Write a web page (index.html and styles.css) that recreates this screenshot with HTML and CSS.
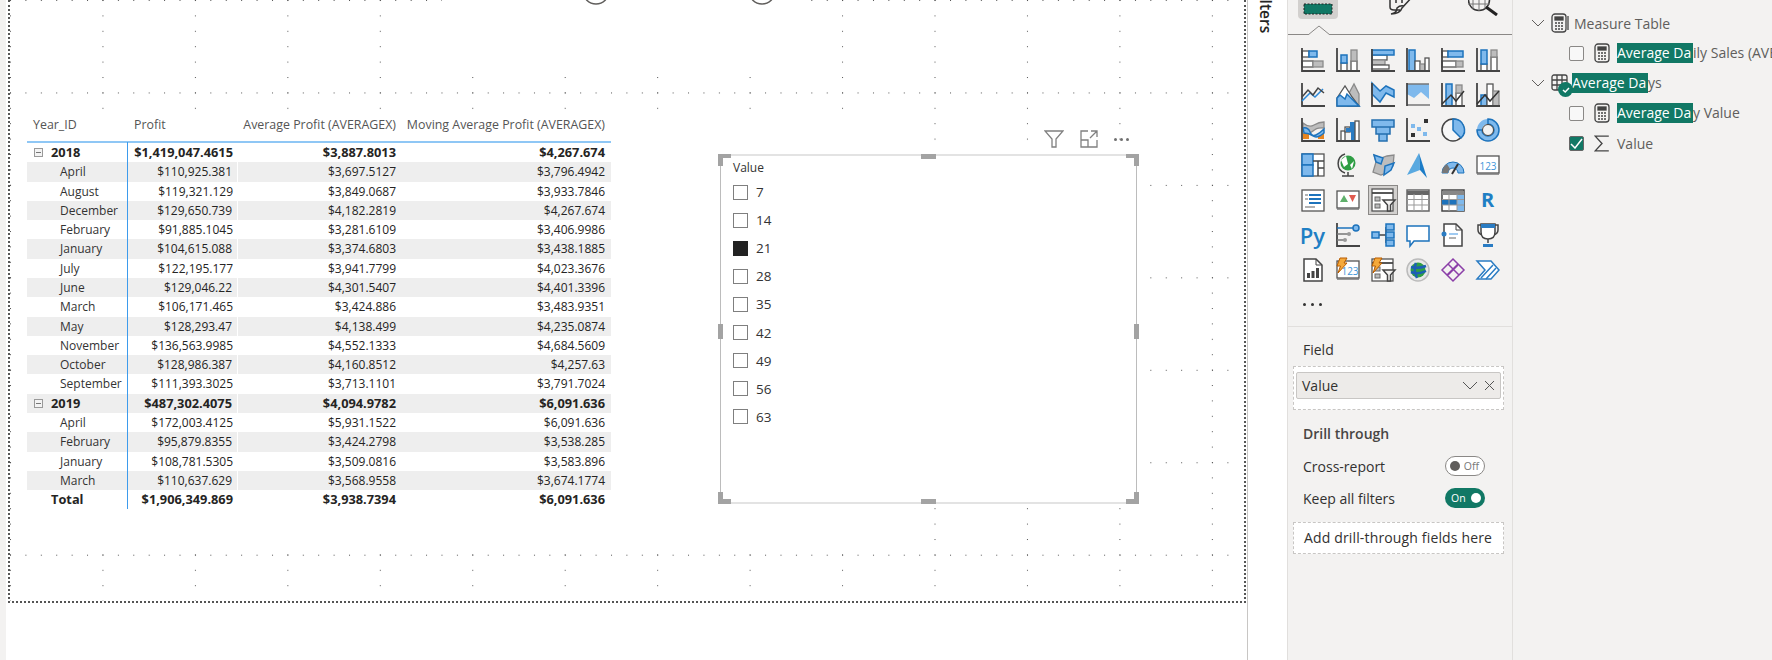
FILE: index.html
```html
<!DOCTYPE html>
<html lang="en">
<head>
<meta charset="utf-8">
<title>Report view</title>
<link rel="stylesheet" href="styles.css">
</head>
<body>
<div class="app">
  <div class="strip"></div>
  <main class="stage">
    <div class="canvas">
      <svg class="dots" xmlns="http://www.w3.org/2000/svg">
        <defs>
          <pattern id="pc" width="92.45" height="15.4" patternUnits="userSpaceOnUse"><rect width="1" height="1" fill="#555"/></pattern>
          <pattern id="pr" width="15.41" height="92.45" patternUnits="userSpaceOnUse"><rect width="1" height="1" fill="#555"/></pattern>
        </defs>
        <rect width="100%" height="100%" fill="url(#pc)"/>
        <rect width="100%" height="100%" fill="url(#pr)"/>
      </svg>
      <div class="blank blank-top"></div>
      <div class="blank blank-mid"></div>
      <svg class="btns" viewBox="0 0 200 8"><circle cx="13" cy="-9" r="13"/><circle cx="179" cy="-9" r="13"/></svg>

      <section class="table">
        <div class="row head"><div class="c1">Year_ID</div><div class="c2 l">Profit</div><div class="c3">Average Profit (AVERAGEX)</div><div class="c4">Moving Average Profit (AVERAGEX)</div></div>
        <div class="tbody">
          <div class="row b"><div class="c1 yr"><i class="minus"></i>2018</div><div class="c2">$1,419,047.4615</div><div class="c3">$3,887.8013</div><div class="c4">$4,267.674</div></div>
          <div class="row z"><div class="c1 mo">April</div><div class="c2">$110,925.381</div><div class="c3">$3,697.5127</div><div class="c4">$3,796.4942</div></div>
          <div class="row"><div class="c1 mo">August</div><div class="c2">$119,321.129</div><div class="c3">$3,849.0687</div><div class="c4">$3,933.7846</div></div>
          <div class="row z"><div class="c1 mo">December</div><div class="c2">$129,650.739</div><div class="c3">$4,182.2819</div><div class="c4">$4,267.674</div></div>
          <div class="row"><div class="c1 mo">February</div><div class="c2">$91,885.1045</div><div class="c3">$3,281.6109</div><div class="c4">$3,406.9986</div></div>
          <div class="row z"><div class="c1 mo">January</div><div class="c2">$104,615.088</div><div class="c3">$3,374.6803</div><div class="c4">$3,438.1885</div></div>
          <div class="row"><div class="c1 mo">July</div><div class="c2">$122,195.177</div><div class="c3">$3,941.7799</div><div class="c4">$4,023.3676</div></div>
          <div class="row z"><div class="c1 mo">June</div><div class="c2">$129,046.22</div><div class="c3">$4,301.5407</div><div class="c4">$4,401.3396</div></div>
          <div class="row"><div class="c1 mo">March</div><div class="c2">$106,171.465</div><div class="c3">$3,424.886</div><div class="c4">$3,483.9351</div></div>
          <div class="row z"><div class="c1 mo">May</div><div class="c2">$128,293.47</div><div class="c3">$4,138.499</div><div class="c4">$4,235.0874</div></div>
          <div class="row"><div class="c1 mo">November</div><div class="c2">$136,563.9985</div><div class="c3">$4,552.1333</div><div class="c4">$4,684.5609</div></div>
          <div class="row z"><div class="c1 mo">October</div><div class="c2">$128,986.387</div><div class="c3">$4,160.8512</div><div class="c4">$4,257.63</div></div>
          <div class="row"><div class="c1 mo">September</div><div class="c2">$111,393.3025</div><div class="c3">$3,713.1101</div><div class="c4">$3,791.7024</div></div>
          <div class="row z b"><div class="c1 yr"><i class="minus"></i>2019</div><div class="c2">$487,302.4075</div><div class="c3">$4,094.9782</div><div class="c4">$6,091.636</div></div>
          <div class="row"><div class="c1 mo">April</div><div class="c2">$172,003.4125</div><div class="c3">$5,931.1522</div><div class="c4">$6,091.636</div></div>
          <div class="row z"><div class="c1 mo">February</div><div class="c2">$95,879.8355</div><div class="c3">$3,424.2798</div><div class="c4">$3,538.285</div></div>
          <div class="row"><div class="c1 mo">January</div><div class="c2">$108,781.5305</div><div class="c3">$3,509.0816</div><div class="c4">$3,583.896</div></div>
          <div class="row z"><div class="c1 mo">March</div><div class="c2">$110,637.629</div><div class="c3">$3,568.9558</div><div class="c4">$3,674.1774</div></div>
          <div class="row b"><div class="c1 tot">Total</div><div class="c2">$1,906,349.869</div><div class="c3">$3,938.7394</div><div class="c4">$6,091.636</div></div>
        </div>
      </section>

      <div class="vis-tools">
        <svg width="20" height="20" viewBox="0 0 20 20"><path d="M1 2H19L12 10V18H8V10Z" class="t"/></svg>
        <svg width="20" height="20" viewBox="0 0 20 20"><path d="M9 2H2V18H18V11M2 11H9V18M12 2H18V8M18 2L11 9" class="t"/></svg>
        <span class="more"><i></i><i></i><i></i></span>
      </div>
      <section class="slicer">
        <b class="h tl"></b><b class="h tr"></b><b class="h bl"></b><b class="h br"></b>
        <b class="m mt"></b><b class="m mb"></b><b class="m ml"></b><b class="m mr"></b>
        <div class="sl-title">Value</div>
        <ul class="sl-list">
          <li><i class="box"></i>7</li>
          <li><i class="box"></i>14</li>
          <li><i class="box on"></i>21</li>
          <li><i class="box"></i>28</li>
          <li><i class="box"></i>35</li>
          <li><i class="box"></i>42</li>
          <li><i class="box"></i>49</li>
          <li><i class="box"></i>56</li>
          <li><i class="box"></i>63</li>
        </ul>
      </section>
    </div>
  </main>

  <aside class="filters"><span>Filters</span></aside>

  <aside class="viz">
    <div class="tabs">
      <div class="tab on"><svg width="30" height="12" viewBox="0 0 30 12"><rect x="1" y="1" width="28" height="10" fill="#117865" stroke="#222" stroke-dasharray="2 1.5"/></svg></div>
      <svg class="tab-ic a" width="28" height="16" viewBox="0 0 28 16"><path d="M2-4V7Q2 10 6 10H12M8-4V3M14-4V3M25-4 14 8Q12 14 3 14Q9 13 9 8Q12 5 16 6" fill="none" stroke="#333" stroke-width="1.5"/></svg>
      <svg class="tab-ic b" width="32" height="16" viewBox="0 0 32 16"><circle cx="11" cy="0" r="10.5" fill="none" stroke="#333" stroke-width="1.5"/><path d="M5-8V9M11-10V11M17-8V9M0 4H22" stroke="#777" fill="none"/><path d="M18 7 29 15" stroke="#222" stroke-width="3"/></svg>
      <svg class="notch" width="22" height="10" viewBox="0 0 22 10"><path d="M0 10 11 1 22 10" fill="#f3f2f1" stroke="#8a8886"/></svg>
    </div>

    <svg width="0" height="0" class="defs">
      <defs>
        <g id="axes"><path d="M1 0V23H24" class="d"/></g>
        <g id="slice"><rect x="1" y="1" width="21" height="22" class="w"/><path d="M1 5H22" class="d" stroke-width="3"/><rect x="4" y="9" width="5" height="4" class="gs"/><rect x="4" y="16" width="5" height="4" class="gs"/><path d="M12 12H24L19.5 17V23H16.500V17Z" fill="#f3f2f1" stroke="#444" stroke-width="1.500"/></g>
        <g id="card"><rect x="1" y="3" width="22" height="17" class="w" stroke="#777"/><path d="M1 21H23" stroke="#777" stroke-width="1.500"/></g>
        <g id="bolt"><path d="M4 0H11L8 5H11L2 15 4.500 8H1Z" fill="#f4a93b" stroke="#b85c00"/></g>
      </defs>
    </svg>

    <div class="icons">
      <svg class="ic" viewBox="0 0 24 24"><rect x="1" y="3" width="7" height="6" class="w"/><rect x="8" y="3" width="8" height="6" class="bl"/><rect x="1" y="13" width="11" height="6" class="w"/><rect x="12" y="13" width="10" height="6" class="gy"/><use href="#axes"/></svg>
      <svg class="ic" viewBox="0 0 24 24"><rect x="5" y="15" width="6" height="8" class="w"/><rect x="5" y="7" width="6" height="8" class="bl"/><rect x="15" y="13" width="6" height="10" class="w"/><rect x="15" y="2" width="6" height="11" class="gy"/><use href="#axes"/></svg>
      <svg class="ic" viewBox="0 0 24 24"><rect x="1" y="7" width="15" height="5" class="w"/><rect x="1" y="2" width="22" height="5" class="bl"/><rect x="1" y="12" width="13" height="5" class="gy"/><rect x="1" y="17" width="17" height="4" class="w"/><path d="M1 1V23H24" class="d"/></svg>
      <svg class="ic" viewBox="0 0 24 24"><rect x="3" y="2" width="6" height="21" class="bl"/><rect x="9" y="13" width="5" height="10" class="w"/><rect x="14" y="16" width="5" height="7" class="gy"/><rect x="19" y="10" width="4" height="13" class="w"/><use href="#axes"/></svg>
      <svg class="ic" viewBox="0 0 24 24"><rect x="1" y="3" width="6" height="6" class="w"/><rect x="7" y="3" width="15" height="6" class="bl"/><rect x="1" y="13" width="14" height="6" class="w"/><rect x="15" y="13" width="7" height="6" class="gy"/><use href="#axes"/></svg>
      <svg class="ic" viewBox="0 0 24 24"><rect x="5" y="16" width="6" height="7" class="w"/><rect x="5" y="2" width="6" height="14" class="bl"/><rect x="15" y="9" width="6" height="14" class="w"/><rect x="15" y="2" width="6" height="7" class="gy"/><use href="#axes"/></svg>

      <svg class="ic" viewBox="0 0 24 24"><use href="#axes"/><path d="M1 18 9 10 14 14 22 6" fill="none" stroke="#2b88d8" stroke-width="1.500"/><path d="M1 14 7 7 12 12 17 5 23 10" fill="none" stroke="#444" stroke-width="1.500"/></svg>
      <svg class="ic" viewBox="0 0 24 24"><path d="M12 12 18 1 23 11V23H12Z" class="gy"/><path d="M1 15 9 3 16 14 23 23H1Z" class="w"/><path d="M1 23V15L4 12 9 16 11 11 23 23Z" class="bl"/></svg>
      <svg class="ic" viewBox="0 0 24 24"><path d="M1 0 9 8 15 3 23 7V14L15 10 9 19 1 11Z" class="bl"/><path d="M1 0V23H24" class="d"/></svg>
      <svg class="ic" viewBox="0 0 24 24"><path d="M1 1H23V16L15 9 8 15 1 11Z" fill="#7fb9ec"/><path d="M1 1H23M1 22H24" stroke="#777" stroke-width="1.500"/><path d="M1 0V23" class="d"/></svg>
      <svg class="ic" viewBox="0 0 24 24"><rect x="5" y="1" width="6" height="22" class="bl"/><rect x="15" y="10" width="6" height="13" class="w"/><rect x="15" y="2" width="6" height="8" class="gy"/><use href="#axes"/><path d="M1 21 10 12 15 18 23 8" fill="none" stroke="#333" stroke-width="1.500"/></svg>
      <svg class="ic" viewBox="0 0 24 24"><rect x="5" y="12" width="6" height="11" class="bl"/><rect x="11" y="1" width="6" height="22" class="w"/><rect x="17" y="8" width="6" height="15" class="gy"/><use href="#axes"/><path d="M1 21 9 12 14 18 23 8" fill="none" stroke="#333" stroke-width="1.500"/></svg>

      <svg class="ic" viewBox="0 0 24 24"><path d="M2 5Q8 10 13 7T23 4V10Q16 9 12 13T2 11Z" class="gy"/><path d="M2 15H8V21H2ZM17 15H23V21H17Z" fill="#e8851f"/><path d="M2 10Q7 9 9 14T15 17 23 11V15Q16 21 12 18T3 15Z" fill="#7fb9ec" stroke="#1d73bc" stroke-width="1.500"/><use href="#axes"/></svg>
      <svg class="ic" viewBox="0 0 24 24"><rect x="5" y="13" width="4" height="10" class="w"/><rect x="9" y="9" width="5" height="5" class="w"/><path d="M10 10H14V4H19V23H15V14H10Z" fill="#2a7cc3"/><rect x="19" y="3" width="4" height="20" class="w"/><use href="#axes"/></svg>
      <svg class="ic" viewBox="0 0 24 24"><path d="M1 2H23V9H1ZM5 9H19V16H5ZM8 16H16V23H8Z" fill="#7fb9ec" stroke="#256fae" stroke-width="1.500"/></svg>
      <svg class="ic" viewBox="0 0 24 24"><use href="#axes"/><rect x="5" y="6" width="4" height="4" fill="#7fb9ec"/><rect x="11" y="9" width="4" height="4" fill="#7fb9ec"/><rect x="18" y="1" width="4" height="4" fill="#333"/><rect x="5" y="15" width="4" height="4" fill="#333"/><rect x="17" y="14" width="4" height="4" fill="#7fb9ec"/></svg>
      <svg class="ic" viewBox="0 0 24 24"><circle cx="12" cy="12" r="11" fill="#f7f7f7" stroke="#444" stroke-width="1.500"/><path d="M12 12V1A11 11 0 0 1 20 20Z" fill="#7fb9ec" stroke="#1d73bc" stroke-width="1.500"/></svg>
      <svg class="ic" viewBox="0 0 24 24"><circle cx="12" cy="12" r="8.500" fill="none" stroke="#7fb9ec" stroke-width="5"/><path d="M12 1A11 11 0 1 1 1 12H6A6 6 0 1 0 12 6Z" fill="#7fb9ec" stroke="#1d73bc" stroke-width="1.500"/><circle cx="12" cy="12" r="5.500" fill="#f3f2f1" stroke="#444"/></svg>

      <svg class="ic" viewBox="0 0 24 24"><rect x="1" y="1" width="22" height="22" class="w" stroke="#444"/><rect x="1" y="1" width="11" height="11" class="bl"/><rect x="1" y="12" width="11" height="11" class="bl"/><path d="M12 8H23M17 8V23M17 15H23" stroke="#444" stroke-width="1.500" fill="none"/></svg>
      <svg class="ic" viewBox="0 0 24 24"><circle cx="12" cy="10" r="7.500" fill="#2f9e44"/><path d="M10 3 5 7 8 14 12 11ZM14 12 18 8 16 16Z" fill="#fff"/><path d="M9 1A10 10 0 0 0 9 20M12 19V23M6 23H18" fill="none" stroke="#444" stroke-width="1.500"/></svg>
      <svg class="ic" viewBox="0 0 24 24"><path d="M3 2 10 5 16 3 23 2 22 13 15 20 10 22 2 19 5 9Z" class="gy" stroke="#555"/><path d="M3 2 12 5 10 11 5 9ZM13 22 14 13 23 10 20 17Z" fill="#7fb9ec" stroke="#1d73bc" stroke-width="1.500"/></svg>
      <svg class="ic" viewBox="0 0 24 24"><path d="M13 0 1 22 14 17Z" fill="#59a9e0"/><path d="M13 0 14 17 21 25Z" fill="#1b7cc7"/></svg>
      <svg class="ic" viewBox="0 0 24 24"><path d="M1 20A11 11 0 0 1 23 20H17A5 5 0 0 0 7 20Z" fill="#7fb9ec" stroke="#1d73bc"/><path d="M1 20A11 11 0 0 1 6 11L9 16A5 5 0 0 0 7 20Z" fill="#777"/><path d="M11 21 17 11" stroke="#333" stroke-width="2"/></svg>
      <svg class="ic" viewBox="0 0 24 24"><use href="#card"/><text x="12" y="16.500" class="num">123</text></svg>

      <svg class="ic" viewBox="0 0 24 24"><rect x="1" y="2" width="22" height="21" class="w"/><path d="M8 7H20M8 11H20" stroke="#1d73bc" stroke-width="2"/><path d="M4 7H7M4 11H7" stroke="#999" stroke-width="1.500"/><path d="M8 15H20" stroke="#1d73bc" stroke-width="2"/><path d="M4 19H14" stroke="#999" stroke-width="1.500"/></svg>
      <svg class="ic" viewBox="0 0 24 24"><use href="#card"/><path d="M4 14 8 7 12 14Z" fill="#5fb06b"/><path d="M13 7H20L16.500 14Z" fill="#e05a4e"/></svg>
      <span class="sel"><svg class="ic" viewBox="0 0 24 24"><use href="#slice"/></svg></span>
      <svg class="ic" viewBox="0 0 24 24"><rect x="1" y="2" width="22" height="21" fill="#fff" stroke="#666" stroke-width="1.500"/><path d="M1 5H23" stroke="#666" stroke-width="4"/><path d="M8 6V23M16 6V23M1 11.500H23M1 17H23" stroke="#999"/></svg>
      <svg class="ic" viewBox="0 0 24 24"><rect x="1" y="2" width="22" height="21" fill="#fff" stroke="#444" stroke-width="1.500"/><path d="M1 5H23" stroke="#888" stroke-width="4"/><rect x="1" y="12" width="22" height="5" fill="#1d73bc"/><rect x="16" y="7" width="7" height="16" fill="#7fb9ec"/><path d="M8 6V23M16 6V23M1 11.500H23M1 17H23" stroke="#999"/></svg>
      <span class="ltr r">R</span>

      <span class="ltr py">Py</span>
      <svg class="ic" viewBox="0 0 24 24"><use href="#axes"/><path d="M1 5H18" stroke="#1d73bc" stroke-width="1.500"/><circle cx="20" cy="5" r="3" fill="#7fb9ec" stroke="#1d73bc" stroke-width="1.500"/><path d="M1 11H12M1 17H8" stroke="#777" stroke-width="1.500"/><circle cx="13" cy="11" r="2" fill="#999"/><circle cx="9" cy="17" r="2" fill="#999"/></svg>
      <svg class="ic" viewBox="0 0 24 24"><path d="M8 12H15M15 4V20" stroke="#444" stroke-width="1.500"/><path d="M1 9H8V15H1ZM15 1H23V7H15ZM15 9H23V15H15ZM15 17H23V23H15Z" fill="#7fb9ec" stroke="#1d73bc" stroke-width="1.500"/></svg>
      <svg class="ic" viewBox="0 0 24 24"><path d="M1 3H23V18H8L4 23V18H1Z" fill="#fff" stroke="#1d73bc" stroke-width="1.500"/></svg>
      <svg class="ic" viewBox="0 0 24 24"><path d="M3 1H15L21 7V23H3Z" fill="#fff" stroke="#444" stroke-width="1.500"/><path d="M15 1V7H21" fill="none" stroke="#444"/><circle cx="3" cy="11" r="2.500" fill="#2a7cc3"/><path d="M8 11H17" stroke="#7fb9ec" stroke-width="1.500"/><path d="M8 15H15" stroke="#999" stroke-width="1.500"/></svg>
      <svg class="ic" viewBox="0 0 24 24"><path d="M5 2H2V7Q2 11 7 12M19 2H22V7Q22 11 17 12M12 16V20M7 22H17" fill="none" stroke="#444" stroke-width="1.500"/><path d="M5 1H19V9Q19 16 12 16T5 9Z" fill="#fff" stroke="#444" stroke-width="1.500"/><path d="M5 1H19V5H5Z" fill="#2a7cc3"/><path d="M7 21H17V24H7Z" fill="#2a7cc3"/></svg>

      <svg class="ic" viewBox="0 0 24 24"><path d="M3 1H15L21 7V23H3Z" fill="#fff" stroke="#444" stroke-width="1.500"/><path d="M15 1V7H21" fill="none" stroke="#444"/><path d="M6 20V15H9V20ZM10.500 20V13H13.500V20ZM15 20V10H18V20Z" fill="#444"/></svg>
      <svg class="ic" viewBox="0 0 24 24"><use href="#card"/><text x="14" y="16.500" class="num">123</text><use href="#bolt"/></svg>
      <svg class="ic" viewBox="0 0 24 24"><use href="#slice"/><use href="#bolt"/></svg>
      <svg class="ic" viewBox="0 0 24 24"><circle cx="12" cy="12" r="11" fill="#e8e8e8" stroke="#bbb" stroke-width="1.500"/><circle cx="12" cy="12" r="7.500" fill="#2f9e44"/><path d="M5 9Q12 11 20 8M5 14Q12 17 20 13M10 5Q7 12 11 20" fill="none" stroke="#1d5fb4" stroke-width="2.500"/></svg>
      <svg class="ic" viewBox="0 0 24 24"><path d="M12 1 23 12 12 23 1 12Z" fill="none" stroke="#8b3fa8" stroke-width="1.500"/><path d="M7 6 18 17M17 6 6 17M12 12 17 7M7 17 12 12" stroke="#8b3fa8" stroke-width="1.500" fill="none"/></svg>
      <svg class="ic" viewBox="0 0 24 24"><path d="M1 3H15L23 12 15 21H1L9 12Z" fill="#fff" stroke="#2a7cc3" stroke-width="1.500"/><path d="M5 20 17 7M10 21 20 10" stroke="#2a7cc3" stroke-width="1.500" fill="none"/></svg>

      <span class="more dark"><i></i><i></i><i></i></span>
    </div>

    <div class="wells">
      <div class="lbl">Field</div>
      <div class="well">
        <div class="chip"><span>Value</span>
          <svg width="16" height="10" viewBox="0 0 16 10"><path d="M1 1 8 8 15 1" class="x"/></svg>
          <svg width="11" height="11" viewBox="0 0 11 11"><path d="M1 1 10 10M10 1 1 10" class="x"/></svg>
        </div>
      </div>
      <div class="drill">Drill through</div>
      <div class="opt first"><span>Cross-report</span><span class="tog off"><i></i>Off</span></div>
      <div class="opt"><span>Keep all filters</span><span class="tog"><em>On</em><i></i></span></div>
      <div class="add">Add drill-through fields here</div>
    </div>
  </aside>

  <aside class="fields">
    <div class="fr t1">
      <svg class="chev" width="14" height="8" viewBox="0 0 14 8"><path d="M1 1 7 7 13 1"/></svg>
      <svg class="calc" width="18" height="20" viewBox="0 0 18 20"><rect x="1" y="1" width="14" height="18" rx="3"/><path d="M17 3V17"/><rect x="4" y="4" width="8" height="3" fill="#444"/><path d="M4 10H6M7 10H9M10 10H12M4 13H6M7 13H9M10 13H12M4 16H6M7 16H9M10 16H12" stroke-width="1.500"/></svg>
      <span class="nm">Measure Table</span>
    </div>
    <div class="fr t2">
      <i class="cb"></i>
      <svg class="calc" width="16" height="20" viewBox="0 0 16 20"><rect x="1" y="1" width="14" height="18" rx="3"/><rect x="4" y="4" width="8" height="3" fill="#444"/><path d="M4 10H6M7 10H9M10 10H12M4 13H6M7 13H9M10 13H12M4 16H6M7 16H9M10 16H12" stroke-width="1.500"/></svg>
      <span class="nm"><span class="hl">Average Da</span>ily Sales (AVERAGEX)</span>
    </div>
    <div class="fr t1">
      <svg class="chev" width="14" height="8" viewBox="0 0 14 8"><path d="M1 1 7 7 13 1"/></svg>
      <span class="tbl">
        <svg class="calc" width="18" height="18" viewBox="0 0 18 18"><rect x="1" y="1" width="15" height="15" rx="2"/><path d="M1 6H16M1 11H16M6 1V16M11 1V16"/></svg>
        <span class="badge"><svg width="8" height="8" viewBox="0 0 8 8"><path d="M1 4 3.200 6 7 2" fill="none" stroke="#fff" stroke-width="1.500"/></svg></span>
      </span>
      <span class="nm"><span class="hl">Average Da</span>ys</span>
    </div>
    <div class="fr t2">
      <i class="cb"></i>
      <svg class="calc" width="16" height="20" viewBox="0 0 16 20"><rect x="1" y="1" width="14" height="18" rx="3"/><rect x="4" y="4" width="8" height="3" fill="#444"/><path d="M4 10H6M7 10H9M10 10H12M4 13H6M7 13H9M10 13H12M4 16H6M7 16H9M10 16H12" stroke-width="1.500"/></svg>
      <span class="nm"><span class="hl">Average Da</span>y Value</span>
    </div>
    <div class="fr t2">
      <i class="cb chk"><svg width="13" height="11" viewBox="0 0 13 11"><path d="M1 6 5 10 12 1" fill="none" stroke="#fff" stroke-width="1.500"/></svg></i>
      <svg class="sig" width="16" height="17" viewBox="0 0 14 15"><path d="M13 1H1L7 7.500 1 14H13" fill="none" stroke="#444" stroke-width="1.200"/></svg>
      <span class="nm">Value</span>
    </div>
  </aside>
</div>
</body>
</html>
```

FILE: styles.css
```css
* { box-sizing: border-box; }
html, body { margin: 0; height: 100%; background: #fff; overflow: hidden; }
body { font-family: "Open Sans", "Noto Sans", sans-serif; color: #252423; }
.app { display: flex; width: 1772px; height: 660px; overflow: hidden; }
.strip { flex: 0 0 6px; background: #f3f2f1; }
.stage { flex: 0 0 1242px; border-right: 1px solid #c8c6c4; padding-left: 2px; }
.canvas { position: relative; width: 1238px; height: 603px; border: 2px dotted #555; border-top: 0; overflow: hidden; background: #fff; }

.dots { position: absolute; left: 0; top: 0; width: 1225px; height: 100%; }
.blank { position: absolute; background: #fff; }
.blank-top { left: 432px; top: 0; width: 356px; height: 70px; }
.blank-mid { left: 4px; top: 110px; width: 890px; height: 436px; }
.btns { position: absolute; left: 573px; top: 0; width: 200px; height: 8px; fill: none; stroke: #605e5c; stroke-width: 1.500; overflow: visible; }

/* table visual */
.table { position: absolute; left: 17px; top: 112px; width: 584px; font-size: 12px; background: #fff; }
.row { display: grid; grid-template-columns: 102px 109px 163px 210px; height: 19.290px; line-height: 19px; white-space: nowrap; }
.row > div { text-align: right; padding-right: 5px; }
.row .c1 { text-align: left; padding: 0 0 0 6px; }
.row .c4 { padding-right: 6px; }
.row .l { text-align: left; padding-left: 5px; }
.head { height: 29px; line-height: 26px; font-size: 12.400px; color: #555; }
.tbody { border-top: 2px solid #8fc7f5; position: relative; }
.tbody::before { content: ""; position: absolute; left: 100px; top: -1px; bottom: 0; width: 1px; background: #3d9bec; }
.z { background: #eee; }
.z > .c2 { border-right: 1px solid #fff; }
.b { font-weight: 700; font-size: 12.800px; }
.row .mo { padding-left: 33px; color: #333; }
.row .yr, .row .tot { padding-left: 24px; position: relative; }
.minus { position: absolute; left: 7px; top: 5px; width: 9px; height: 9px; border: 1px solid #999; background: #f3f3f3; }
.minus::after { content: ""; position: absolute; left: 1px; right: 1px; top: 3px; height: 1px; background: #777; }

/* slicer */
.vis-tools { position: absolute; left: 1034px; top: 129px; display: flex; align-items: center; gap: 15px; }
.t { fill: none; stroke: #808080; stroke-width: 1.300; }
.more { display: inline-flex; gap: 3px; }
.more i { width: 3px; height: 3px; border-radius: 50%; background: #707070; }
.slicer { position: absolute; left: 710px; top: 154px; width: 417px; height: 350px; background: #fff; border: solid #bcbcbc; border-width: 2px 1px; border-top-color: #e3e3e3; border-bottom-color: #e3e3e3; padding: 3px 0 0 12px; }
.sl-title { font-size: 12px; line-height: 18px; color: #333; }
.sl-list { list-style: none; margin: 1px 0 0; padding: 0; }
.sl-list li { display: flex; align-items: center; gap: 8px; height: 28.100px; font-size: 13.500px; color: #333; }
.box { flex: none; width: 15px; height: 15px; border: 1px solid #7f7f7f; background: #fff; }
.box.on { background: #222; border-color: #222; }
.h { position: absolute; width: 13px; height: 12px; border: 0 solid #a3a3a3; }
.tl { left: -3px; top: -2px; border-width: 4px 0 0 5px; }
.tr { right: -3px; top: -2px; border-width: 4px 5px 0 0; }
.bl { left: -3px; bottom: -2px; border-width: 0 0 5px 5px; }
.br { right: -3px; bottom: -2px; border-width: 0 5px 5px 0; }
.m { position: absolute; background: #a3a3a3; }
.mt, .mb { left: 200px; width: 15px; height: 5px; }
.mt { top: -2px; }
.mb { bottom: -2px; }
.ml, .mr { top: 168px; width: 5px; height: 15px; }
.ml { left: -3px; }
.mr { right: -3px; }

/* filters pane */
.filters { flex: 0 0 39px; overflow: hidden; }
.filters span { display: block; writing-mode: vertical-rl; margin: -13px 0 0 8px; font-size: 15.500px; font-weight: 600; line-height: 20px; color: #252423; }

/* visualizations pane */
.viz { flex: 0 0 226px; background: #f3f2f1; border-left: 1px solid #e1dfdd; border-right: 1px solid #e1dfdd; position: relative; }
.tabs { position: relative; height: 35px; border-bottom: 1px solid #8a8886; }
.tab.on { position: absolute; left: 10px; top: 0; width: 40px; height: 19px; background: #d2d0ce; border-radius: 0 0 4px 4px; display: flex; align-items: center; justify-content: center; padding-bottom: 2px; }
.tab-ic { position: absolute; top: 0; }
.tab-ic.a { left: 100px; }
.tab-ic.b { left: 180px; }
.notch { position: absolute; left: 20px; top: 25px; }
.defs { position: absolute; }
.icons { display: grid; grid-template-columns: repeat(6, 35px); grid-auto-rows: 35px; padding: 7px 0 0 7px; height: 292px; justify-items: center; align-items: center; border-bottom: 1px solid #e1dfdd; }
.ic { display: block; width: 24px; height: 24px; overflow: visible; }
.d { fill: none; stroke: #444; stroke-width: 1.800; }
.w { fill: #fff; stroke: #555; stroke-width: 1.300; }
.bl { fill: #7fb9ec; stroke: #1d73bc; stroke-width: 1.500; }
.gy { fill: #bdbdbd; stroke: #8a8a8a; stroke-width: 1.300; }
.gs { fill: #bbb; stroke: #666; }
.num { font-size: 10px; fill: #3f96d8; text-anchor: middle; font-family: "Open Sans", sans-serif; }
.sel { display: flex; width: 30px; height: 30px; align-items: center; justify-content: center; background: #d2d0ce; border: 1px solid #8a8886; }
.ltr { font-weight: 700; color: #1f7fc4; line-height: 1; }
.r { font-size: 20px; }
.py { font-size: 22px; font-weight: 600; }
.more.dark i { background: #333; }
.more.dark { gap: 5px; }

.wells { padding: 13px 8px 0 5px; font-size: 14px; color: #323130; }
.lbl { padding-left: 10px; line-height: 20px; }
.well { margin-top: 6px; height: 44px; border: 1px dashed #c8c6c4; background: #fff; padding: 5px 2px; }
.chip { display: flex; align-items: center; height: 27px; padding: 0 5px; gap: 6px; background: #edebe9; border: 1px solid #c8c6c4; border-radius: 2px; }
.chip span { flex: 1; }
.x { fill: none; stroke: #555; stroke-width: 1; }
.drill { padding-left: 10px; margin-top: 14px; line-height: 20px; font-weight: 600; color: #484644; }
.opt { display: flex; align-items: center; justify-content: space-between; padding: 0 19px 0 10px; height: 32px; }
.opt.first { margin-top: 6px; }
.tog { display: flex; align-items: center; justify-content: space-between; width: 40px; height: 20px; border-radius: 10px; background: #117865; color: #fff; font-size: 10.500px; padding: 0 4px 0 6px; }
.tog i { width: 10px; height: 10px; border-radius: 50%; background: #fff; }
.tog em { font-style: normal; }
.tog.off { background: #fff; border: 1px solid #8a8886; color: #777; padding: 0 5px 0 4px; }
.tog.off i { background: #605e5c; }
.add { margin-top: 8px; height: 32px; line-height: 30px; border: 1px dashed #c8c6c4; background: #fff; padding-left: 10px; white-space: nowrap; letter-spacing: 0.150px; }

/* fields pane */
.fields { flex: 1; background: #f3f2f1; overflow: hidden; padding-top: 8px; font-size: 14px; color: #605e5c; white-space: nowrap; }
.fr { display: flex; align-items: center; height: 30px; }
.t1 { padding-left: 18px; }
.t2 { padding-left: 56px; }
.chev { flex: none; fill: none; stroke: #605e5c; stroke-width: 1; }
.calc { flex: none; fill: none; stroke: #444; stroke-width: 1.300; }
.t1 .chev { margin-right: 6px; }
.t1 .nm { margin-left: 5px; }
.t2 .calc, .t2 .sig { margin: 0 7px 0 10px; }
.cb { flex: none; display: flex; align-items: center; justify-content: center; width: 15px; height: 15px; border: 1px solid #8a8886; border-radius: 2px; background: #f8f8f8; }
.cb.chk { background: #117865; border-color: #666; }
.hl { display: inline-block; width: 76px; height: 20px; line-height: 19px; background: #117865; color: #fff; white-space: nowrap; overflow: visible; }
.tbl { position: relative; flex: none; display: block; width: 18px; height: 18px; margin-right: -2px; }
.tbl .calc { margin: 0; }
.badge { position: absolute; left: 7px; top: 8px; width: 15px; height: 15px; border-radius: 50%; background: #117865; display: flex; align-items: center; justify-content: center; }
```
